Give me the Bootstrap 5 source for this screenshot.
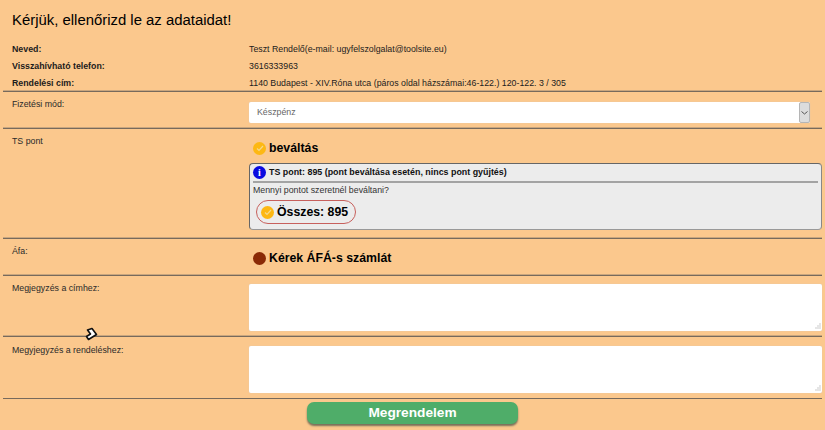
<!DOCTYPE html>
<html lang="hu">
<head>
  <meta charset="UTF-8" />
  <meta name="viewport" content="width=device-width, initial-scale=1" />
  <title>Megrendelés</title>
  <link href="https://cdn.jsdelivr.net/npm/bootstrap@5.3.0/dist/css/bootstrap.min.css" rel="stylesheet" />
  <style>
    html, body { height: 430px; overflow: hidden; }
    body {
      background: #fbc88d;
      color: #1c1c1c;
      font-family: "Liberation Sans", Arial, sans-serif;
      font-size: 8.8px;
      line-height: 17px;
      padding: 0 3px;
      position: relative;
    }
    .page-title { font-size: 14.9px; font-weight: 400; line-height: 20px; margin: 0; padding: 10px 9px 0; height: 41px; color: #000; }
    .info-row { display: flex; height: 17px; }
    .info-last { height: 16px; }
    .left-col { width: 246px; padding-left: 9px; flex: none; }
    .right-col { flex: 1; min-width: 0; }
    .info-row .left-col { font-weight: 700; }
    .form-row { display: flex; border-top: 1px solid #776a5c; box-shadow: 0 -1px 0 #c9a67e; }
    .form-row .left-col { padding-top: 4px; color: #2a2a2a; }
    .row-pay { height: 37px; }
    .row-ts { height: 110px; }
    .row-afa { height: 37px; }
    .row-note { height: 61px; }
    .row-order { height: 62px; }
    .row-order .left-col { padding-top: 5px; }
    .pay-select {
      width: 561px; height: 21px; margin-top: 10px;
      border: 0; border-radius: 2px; background: #fff; color: #666;
      font-size: 8.8px; line-height: 21px; padding-left: 8px;
      display: flex; justify-content: space-between; box-shadow: 0 0 1px #ccc;
    }
    .pay-arrow { width: 11px; background: #dcdcdc; border: 1px solid #b5b5b5; border-radius: 2px; display: flex; align-items: center; justify-content: center; }
    .check-line { display: flex; align-items: center; gap: 3px; font-size: 12.3px; font-weight: 700; color: #000; padding-left: 4px; }
    .ts-check { height: 22px; margin-top: 8px; }
    .afa-check { height: 22px; margin-top: 8px; }
    .dot { width: 13px; height: 13px; border-radius: 50%; flex: none; display: inline-flex; align-items: center; justify-content: center; }
    .dot-on { background: #fdb813; }
    .dot-off { background: #8a2a06; }
    .ts-box {
      height: 67px; margin-top: 4px; background: #ececec;
      border: 1px solid #666; border-bottom-color: #999; border-right-color: #888;
      border-radius: 4px; overflow: hidden; color: #222;
    }
    .ts-head { display: flex; align-items: center; gap: 3px; height: 19px; margin: 0 3px; border-bottom: 2px solid #a3a3a3; font-weight: 700; font-size: 8.9px; color: #111; }
    .info-dot { width: 13px; height: 13px; border-radius: 50%; background: #0a0ae0; color: #fff; font: 700 10px/13px "Liberation Serif", serif; text-align: center; flex: none; }
    .ts-ask { padding-left: 3px; height: 15px; line-height: 14px; color: #333; }
    .sum-pill {
      display: inline-flex; align-items: center; gap: 3px; height: 24px; margin: 2px 0 0 6px; padding: 0 7px 0 4px;
      border: 1px solid #c7605c; border-radius: 12px; font-size: 12.3px; font-weight: 700; color: #000;
    }
    .note-area {
      width: 100%; height: 47px; margin-top: 8px;
      background: #fff; border-radius: 2px; box-shadow: 0 0 1px #ccc; position: relative;
    }
    .note-area svg { position: absolute; right: 1px; bottom: 1px; }
    .row-order .note-area { margin-top: 9px; }
    .order-btn-wrap { border-top: 1px solid #776a5c; display: flex; justify-content: center; padding-top: 3px; }
    .order-btn {
      width: 211px; height: 22px; padding: 0; background: #4fad69; color: #fff;
      border: 0; border-radius: 7px; font: 700 13.7px/22px "Liberation Sans", Arial, sans-serif;
      box-shadow: 0 2px 2px #77705a;
    }
    .pointer-ico { position: absolute; left: 85px; top: 327px; }
  </style>
</head>
<body>
  <h1 class="page-title">Kérjük, ellenőrizd le az adataidat!</h1>

  <div class="info-row"><div class="left-col">Neved:</div><div class="right-col">Teszt Rendelő(e-mail: ugyfelszolgalat@toolsite.eu)</div></div>
  <div class="info-row"><div class="left-col">Visszahívható telefon:</div><div class="right-col">3616333963</div></div>
  <div class="info-row info-last"><div class="left-col">Rendelési cím:</div><div class="right-col">1140 Budapest - XIV.Róna utca (páros oldal házszámai:46-122.) 120-122. 3 / 305</div></div>

  <div class="form-row row-pay">
    <div class="left-col">Fizetési mód:</div>
    <div class="right-col">
      <div class="pay-select">
        <span>Készpénz</span>
        <span class="pay-arrow"><svg width="7" height="4" viewBox="0 0 7 4"><path d="M.5.5 3.5 3 6.5.5" fill="none" stroke="#555" stroke-width="1"/></svg></span>
      </div>
    </div>
  </div>

  <div class="form-row row-ts">
    <div class="left-col">TS pont</div>
    <div class="right-col">
      <div class="check-line ts-check">
        <span class="dot dot-on"><svg width="8" height="7" viewBox="0 0 8 7"><path d="M1 3.5 3 5.5 7 1" fill="none" stroke="#f6d98a" stroke-width="1.2"/></svg></span>
        beváltás
      </div>
      <div class="ts-box">
        <div class="ts-head"><span class="info-dot">i</span>TS pont: 895 (pont beváltása esetén, nincs pont gyűjtés)</div>
        <div class="ts-ask">Mennyi pontot szeretnél beváltani?</div>
        <div class="sum-pill">
          <span class="dot dot-on"><svg width="8" height="7" viewBox="0 0 8 7"><path d="M1 3.5 3 5.5 7 1" fill="none" stroke="#f6d98a" stroke-width="1.2"/></svg></span>
          Összes: 895
        </div>
      </div>
    </div>
  </div>

  <div class="form-row row-afa">
    <div class="left-col">Áfa:</div>
    <div class="right-col">
      <div class="check-line afa-check"><span class="dot dot-off"></span>Kérek ÁFÁ-s számlát</div>
    </div>
  </div>

  <div class="form-row row-note">
    <div class="left-col">Megjegyzés a címhez:</div>
    <div class="right-col">
      <div class="note-area"><svg width="7" height="7" viewBox="0 0 7 7"><path d="M6 1v.01M4 3v.01M6 3v.01M2 5v.01M4 5v.01M6 5v.01" stroke="#aaa" stroke-width="1.2" stroke-linecap="square"/></svg></div>
    </div>
  </div>

  <div class="form-row row-order">
    <div class="left-col">Megyjegyzés a rendeléshez:</div>
    <div class="right-col">
      <div class="note-area"><svg width="7" height="7" viewBox="0 0 7 7"><path d="M6 1v.01M4 3v.01M6 3v.01M2 5v.01M4 5v.01M6 5v.01" stroke="#aaa" stroke-width="1.2" stroke-linecap="square"/></svg></div>
    </div>
  </div>

  <div class="order-btn-wrap">
    <button type="button" class="btn order-btn">Megrendelem</button>
  </div>

  <svg class="pointer-ico" width="13" height="15" viewBox="0 0 13 15"><path d="M2.5 3 7 1.5 11.5 7.5 3.5 12.5 1.5 9.5 5.5 7Z" fill="#fff" stroke="#111" stroke-width="1.6" stroke-linejoin="round"/></svg>

  <script src="https://cdn.jsdelivr.net/npm/bootstrap@5.3.0/dist/js/bootstrap.bundle.min.js"></script>
</body>
</html>
